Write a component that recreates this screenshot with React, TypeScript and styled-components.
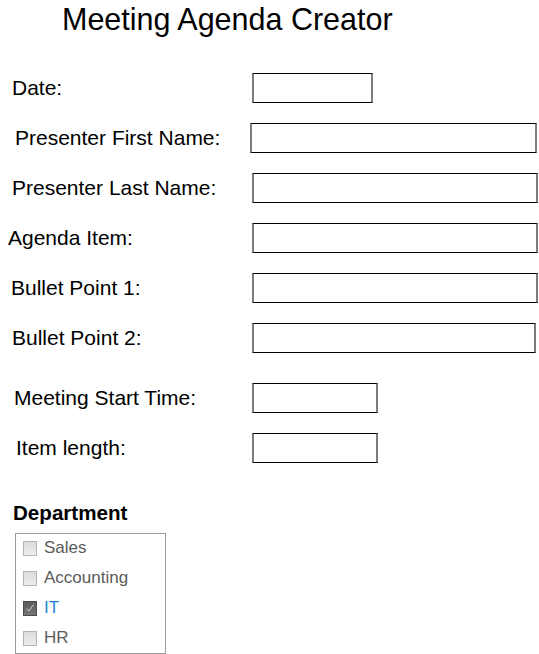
import styled, { createGlobalStyle } from "styled-components"

const Global = createGlobalStyle`
  body {
    margin: 0;
    background: #fff;
    font-family: "Liberation Sans", Arial, Helvetica, sans-serif;
    color: #000;
  }
`

type Field = { label: string; indent: number; width: number; shift?: number; extraTop?: number }

const fields: Field[] = [
  { label: "Date:", indent: 12, width: 121 },
  { label: "Presenter First Name:", indent: 15, width: 287, shift: -2 },
  { label: "Presenter Last Name:", indent: 12, width: 286 },
  { label: "Agenda Item:", indent: 8, width: 286 },
  { label: "Bullet Point 1:", indent: 11, width: 286 },
  { label: "Bullet Point 2:", indent: 12, width: 284 },
  { label: "Meeting Start Time:", indent: 14, width: 126, extraTop: 10 },
  { label: "Item length:", indent: 16, width: 126 },
]

const departments = [
  { name: "Sales", checked: false },
  { name: "Accounting", checked: false },
  { name: "IT", checked: true },
  { name: "HR", checked: false },
]

const App = () => {
  return (
    <Page>
      <Global />
      <Title>Meeting Agenda Creator</Title>
      <Form>
        {fields.map((f) => (
          <Row key={f.label} $extraTop={f.extraTop || 0}>
            <Label $indent={f.indent}>{f.label}</Label>
            <Input type="text" $width={f.width} $shift={f.shift || 0} />
          </Row>
        ))}
      </Form>
      <Heading>Department</Heading>
      <ListBox>
        {departments.map((d) => (
          <Option key={d.name}>
            <Check $checked={d.checked}>
              {d.checked && (
                <svg width="10" height="10" viewBox="0 0 10 10">
                  <path d="M1.5 5.5 L4 8 L8.5 1.5" fill="none" stroke="#cfcfcf" strokeWidth="1" />
                </svg>
              )}
            </Check>
            <OptionText $checked={d.checked}>{d.name}</OptionText>
          </Option>
        ))}
      </ListBox>
    </Page>
  )
}
export default App

const Page = styled.div`
  width: 539px;
  padding-top: 2px;
`

const Title = styled.h1`
  margin: 0;
  padding-left: 62px;
  font-size: 30.5px;
  font-weight: normal;
  line-height: 34px;
`

const Form = styled.div`
  display: flex;
  flex-direction: column;
  gap: 20px;
  margin-top: 37px;
`

const Row = styled.div<{ $extraTop: number }>`
  display: flex;
  align-items: center;
  height: 30px;
  margin-top: ${(p) => p.$extraTop}px;
`

const Label = styled.label<{ $indent: number }>`
  box-sizing: border-box;
  width: 252px;
  padding-left: ${(p) => p.$indent}px;
  font-size: 21px;
  line-height: 30px;
  white-space: nowrap;
`

const Input = styled.input<{ $width: number; $shift: number }>`
  box-sizing: border-box;
  width: ${(p) => p.$width}px;
  height: 30px;
  margin: 0 0 0 ${(p) => p.$shift}px;
  padding: 0 4px;
  border-top: 1px solid #000;
  border-bottom: 1px solid #000;
  border-left: 2px solid #7d7d7d;
  border-right: 2px solid #7d7d7d;
  background: #fff;
  font-size: 16px;
  outline: none;
`

const Heading = styled.h2`
  margin: 38px 0 0 13px;
  font-size: 20.6px;
  font-weight: bold;
  line-height: 23px;
`

const ListBox = styled.div`
  margin: 9px 0 0 15px;
  width: 151px;
  box-sizing: border-box;
  border: 1px solid #9a9a9a;
`

const Option = styled.div`
  display: flex;
  align-items: center;
  gap: 7px;
  height: 30px;
  padding-left: 7px;
  &:first-child {
    margin-top: -1px;
  }
`

const Check = styled.span<{ $checked: boolean }>`
  box-sizing: border-box;
  width: 14px;
  height: 15px;
  display: flex;
  align-items: center;
  justify-content: center;
  border: 1px solid ${(p) => (p.$checked ? "#4a4a4a" : "#b4b4b4")};
  background: ${(p) =>
    p.$checked
      ? "linear-gradient(#5a5a5a, #777)"
      : "linear-gradient(#dcdcdc, #ececec)"};
`

const OptionText = styled.span<{ $checked: boolean }>`
  font-size: 17px;
  line-height: 20px;
  color: ${(p) => (p.$checked ? "#1f84d8" : "#5a5a5a")};
`
